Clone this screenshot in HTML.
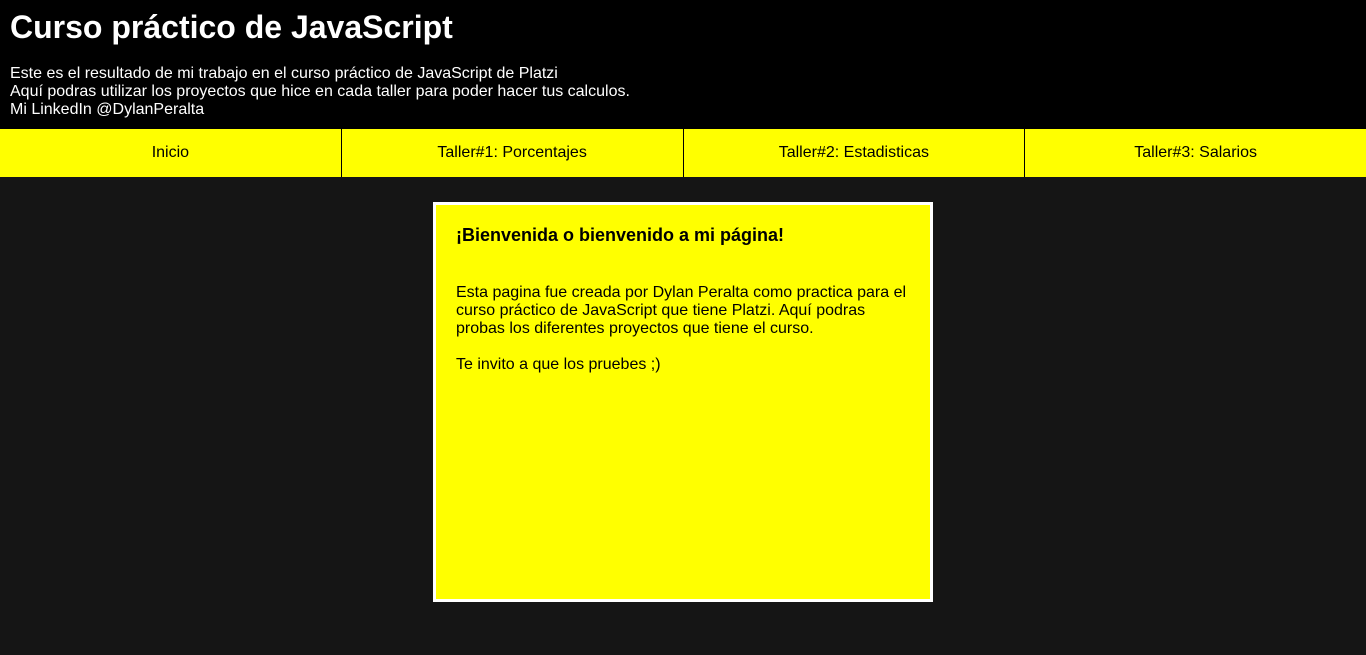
<!DOCTYPE html>
<html><head><meta charset="utf-8"><style>
*{margin:0;padding:0;box-sizing:border-box}
body{width:1366px;height:655px;background:#151515;font-family:"Liberation Sans",Arial,sans-serif;overflow:hidden}
header{background:#000;color:#fff;height:129px;padding:9px 10px 0}
h1{font-size:32px;line-height:37px;font-weight:bold}
.sub{margin-top:19px;font-size:16px;line-height:18px}
nav{display:flex;height:48px;background:#ff0}
nav div{flex:1;text-align:center;line-height:48px;font-size:16px;color:#000;border-left:1px solid #000}
nav div:first-child{border-left:none}
.box{position:absolute;left:433px;top:202px;width:500px;height:400px;border:3px solid #fff;background:#ff0;padding:18px 20px}
h2{font-size:18px;line-height:22px;font-weight:bold;margin-top:1px}
p{font-size:16px;line-height:18px;margin-top:38px}
</style></head><body>
<header><h1>Curso práctico de JavaScript</h1>
<div class="sub">Este es el resultado de mi trabajo en el curso práctico de JavaScript de Platzi<br>Aquí podras utilizar los proyectos que hice en cada taller para poder hacer tus calculos.<br>Mi LinkedIn @DylanPeralta</div></header>
<nav><div>Inicio</div><div>Taller#1: Porcentajes</div><div>Taller#2: Estadisticas</div><div>Taller#3: Salarios</div></nav>
<div class="box"><h2>¡Bienvenida o bienvenido a mi página!</h2>
<p>Esta pagina fue creada por Dylan Peralta como practica para el curso práctico de JavaScript que tiene Platzi. Aquí podras probas los diferentes proyectos que tiene el curso.<br><br>Te invito a que los pruebes ;)</p></div>
</body></html>
